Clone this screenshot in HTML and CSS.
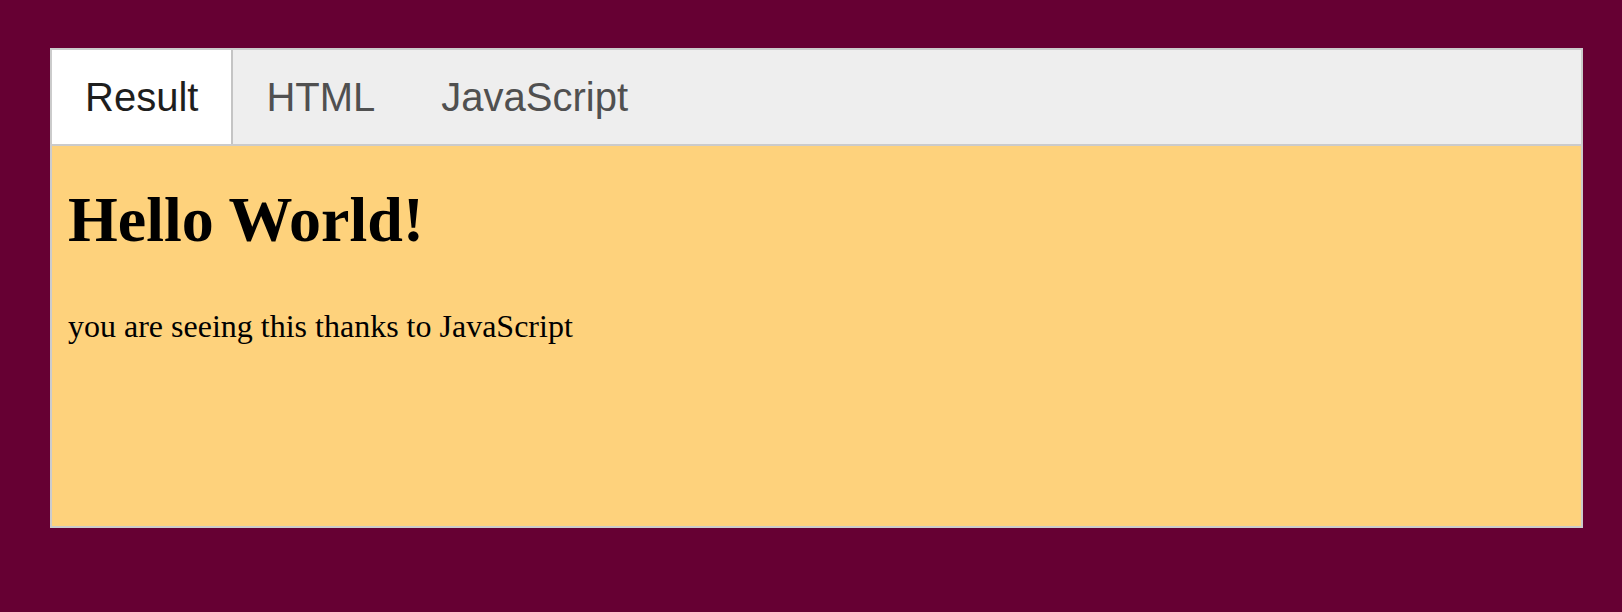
FILE: index.html
```html
<!DOCTYPE html>
<html>
<head>
<meta charset="utf-8">
<title>Result</title>
<link rel="stylesheet" href="styles.css">
</head>
<body>
<div class="embed">
  <nav class="tabs">
    <div class="tab active">Result</div>
    <div class="tab">HTML</div>
    <div class="tab">JavaScript</div>
  </nav>
  <div class="result">
    <h1 class="title">Hello World!</h1>
    <p class="text">you are seeing this thanks to JavaScript</p>
  </div>
</div>
</body>
</html>
```

FILE: styles.css
```css
html, body {
  margin: 0;
  padding: 0;
}
body {
  background: #660033;
  padding: 48px 39px 0 50px;
  height: 612px;
  box-sizing: border-box;
  overflow: hidden;
}
.embed {
  border: 2px solid #cbcbcb;
  height: 480px;
  box-sizing: border-box;
  display: flex;
  flex-direction: column;
}
.tabs {
  display: flex;
  height: 96px;
  box-sizing: border-box;
  background: #eeeeee;
  border-bottom: 2px solid #cbcbcb;
  font-family: "Liberation Sans", Arial, sans-serif;
  font-size: 40px;
}
.tab {
  display: flex;
  align-items: center;
  padding: 0 33px;
  color: #505050;
}
.tab.active {
  background: #ffffff;
  color: #1e1e1e;
  border-right: 2px solid #c4c4c4;
}
.result {
  flex: 1;
  background: #fed27c;
  padding: 1px 16px 0 16px;
  font-family: "Liberation Serif", "Times New Roman", serif;
  color: #000;
}
.title {
  font-size: 64px;
  font-weight: bold;
  line-height: 1.1;
  margin: 38px 0 0 0;
}
.text {
  font-size: 32px;
  margin: 53px 0 0 0;
  line-height: 1.15;
}
```
